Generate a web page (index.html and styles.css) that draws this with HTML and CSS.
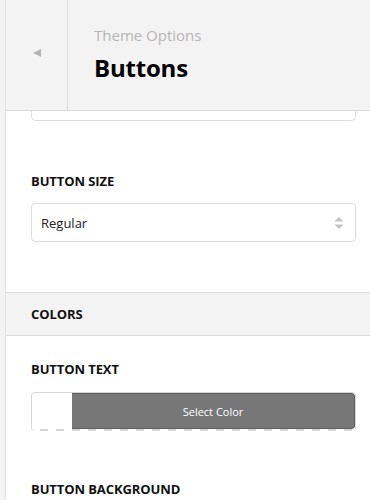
FILE: index.html
```html
<!DOCTYPE html>
<html>
<head>
<meta charset="utf-8">
<link rel="stylesheet" href="styles.css">
</head>
<body>
<div class="panel">
  <div class="rail"></div>
  <div class="main">
    <div class="header">
      <div class="back"><span class="arrow"></span></div>
      <div class="titles">
        <div class="crumb">Theme Options</div>
        <div class="title">Buttons</div>
      </div>
    </div>
    <div class="section">
      <div class="input-tail"></div>
      <div class="control">
        <div class="label">BUTTON SIZE</div>
        <div class="select">
          <span>Regular</span>
          <svg class="updown" width="10" height="14" viewBox="0 0 10 14"><path d="M5 1 L9.5 5.5 H0.5 Z" fill="#c4c4c4"/><path d="M0.5 8.5 H9.5 L5 13 Z" fill="#c4c4c4"/></svg>
        </div>
      </div>
    </div>
    <div class="group-head">COLORS</div>
    <div class="section">
      <div class="control">
        <div class="label">BUTTON TEXT</div>
        <div class="color-btn">
          <div class="swatch"></div>
          <div class="select-color">Select Color</div>
        </div>
      </div>
      <div class="control next">
        <div class="label">BUTTON BACKGROUND</div>
      </div>
    </div>
  </div>
</div>
</body>
</html>
```
FILE: styles.css
```css
html, body {
  margin: 0;
  padding: 0;
  background: #fff;
}
body {
  font-family: "Open Sans", "Noto Sans", sans-serif;
  color: #222;
  width: 370px;
  height: 500px;
  overflow: hidden;
}
.panel {
  display: flex;
  min-height: 500px;
}
.rail {
  width: 5px;
  background: #f3f3f3;
  border-right: 1px solid #e2e2e2;
  flex: none;
}
.main {
  flex: 1;
  min-width: 0;
}
.header {
  display: flex;
  height: 110px;
  background: #f3f3f3;
  border-bottom: 1px solid #dcdcdc;
}
.back {
  width: 62px;
  border-right: 1px solid #dcdcdc;
  display: flex;
  align-items: center;
  justify-content: center;
  padding-bottom: 5px;
  box-sizing: border-box;
}
.arrow {
  width: 0;
  height: 0;
  border-top: 4px solid transparent;
  border-bottom: 4px solid transparent;
  border-right: 8px solid #b4b4b4;
}
.titles {
  padding: 25px 0 0 26px;
}
.crumb {
  font-size: 15px;
  color: #b5b5b5;
  line-height: 20px;
}
.title {
  font-size: 24px;
  font-weight: 700;
  color: #000;
  line-height: 30px;
  margin-top: 8px;
  letter-spacing: -0.2px;
}
.section {
  padding: 0 14px 0 25px;
}
.input-tail {
  height: 9px;
  border: 1px solid #dcdcdc;
  border-top: none;
  border-radius: 0 0 5px 5px;
}
.control {
  padding-top: 51px;
}
.label {
  font-size: 13px;
  font-weight: 700;
  line-height: 18px;
  color: #111;
  letter-spacing: -0.1px;
}
.select {
  margin-top: 13px;
  height: 37px;
  border: 1px solid #dcdcdc;
  border-radius: 4px;
  display: flex;
  align-items: center;
  justify-content: space-between;
  padding: 0 11px 0 9px;
  font-size: 13px;
  color: #222;
  margin-bottom: 50px;
}
.updown {
  display: block;
}
.group-head {
  height: 42px;
  background: #f3f3f3;
  border-top: 1px solid #dcdcdc;
  border-bottom: 1px solid #dcdcdc;
  padding-left: 25px;
  font-size: 13px;
  font-weight: 700;
  line-height: 42px;
  color: #111;
  letter-spacing: -0.1px;
}
.section .control:first-child {
  padding-top: 24px;
}
.color-btn {
  margin-top: 14px;
  height: 39px;
  display: flex;
  border-radius: 4px;
  overflow: hidden;
  border: 1px solid #d6d6d6;
  border-bottom: none;
  box-sizing: border-box;
  background: repeating-linear-gradient(90deg, #fff 0 8px, #d4d4d4 8px 16px) bottom / 100% 2px no-repeat, #fff;
}
.swatch {
  width: 40px;
  height: 36px;
  background: #fff;
}
.select-color {
  flex: 1;
  height: 36px;
  box-sizing: border-box;
  background: #777;
  border: 1px solid #5e5e5e;
  border-left: none;
  color: #fff;
  font-size: 11px;
  display: flex;
  align-items: center;
  justify-content: center;
  border-radius: 0 4px 4px 0;
}
.control.next {
  padding-top: 49px;
}
```
